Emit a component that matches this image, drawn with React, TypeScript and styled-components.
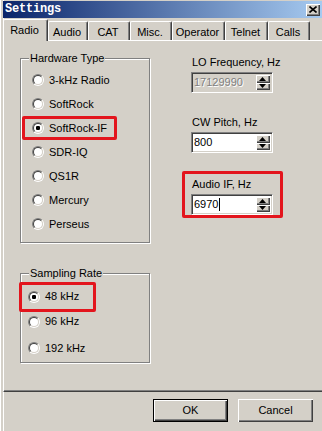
import React from "react";
import styled, { createGlobalStyle } from "styled-components";

const GlobalStyle = createGlobalStyle`
  html, body { margin: 0; padding: 0; background: #d4d0c8; }
  body {
    font-family: "Liberation Sans", Arial, sans-serif;
    font-size: 11px;
    color: #000;
  }
  * { box-sizing: border-box; }
`;

const Window = styled.div`
  width: 322px;
  height: 431px;
  overflow: hidden;
  background: #d4d0c8;
  padding: 1px 0 0 3px;
  box-shadow: inset 1px 0 0 #fff, inset 3px 0 0 #d4d0c8, inset 4px 0 0 #fff;
  display: flex;
  flex-direction: column;
`;

const TitleBar = styled.div`
  height: 17px;
  flex: none;
  display: flex;
  align-items: center;
  justify-content: space-between;
  padding: 0 2px 0 2px;
  background: linear-gradient(to right, #0a246a, #a6caf0);
`;

const TitleText = styled.span`
  font-family: "Liberation Mono", "Courier New", monospace;
  font-weight: bold;
  font-size: 12px;
  letter-spacing: -0.2px;
  color: #fff;
  line-height: 17px;
`;

const CloseButton = styled.div`
  width: 14px;
  height: 12px;
  background: #d4d0c8;
  box-shadow: inset 1px 1px 0 #fff, inset -1px -1px 0 #404040, inset -2px -2px 0 #808080;
  display: flex;
  align-items: center;
  justify-content: center;
`;

const TabStrip = styled.div`
  margin-top: 1px;
  height: 21px;
  flex: none;
  display: flex;
  align-items: flex-end;
`;

const Tab = styled.div<{ $w: number; $active?: boolean }>`
  width: ${(p) => p.$w}px;
  height: ${(p) => (p.$active ? 22 : 19)}px;
  margin-bottom: ${(p) => (p.$active ? -1 : 0)}px;
  position: relative;
  z-index: ${(p) => (p.$active ? 1 : 0)};
  background: #d4d0c8;
  border-top: 1px solid #fff;
  border-left: 1px solid #fff;
  border-right: 1px solid #404040;
  border-radius: 2px 2px 0 0;
  box-shadow: inset -1px 0 0 #808080;
  display: flex;
  justify-content: center;
  align-items: center;
  padding-top: ${(p) => (p.$active ? 0 : 2)}px;
  padding-right: 2px;
  line-height: 13px;
  white-space: nowrap;
`;

const Panel = styled.div`
  height: 352px;
  flex: none;
  border-top: 1px solid #fff;
  border-left: 1px solid #fff;
  border-bottom: 1px solid #404040;
  box-shadow: inset 0 -1px 0 #808080;
  display: flex;
  gap: 41px;
  padding: 17px 0 0 16px;
`;

const Column = styled.div<{ $w: number; $shift?: number }>`
  width: ${(p) => p.$w}px;
  flex: none;
  display: flex;
  flex-direction: column;
  margin-top: ${(p) => p.$shift ?? 0}px;
`;

const GroupBox = styled.div<{ $h: number; $mt?: number; $pt: number; $pl: number }>`
  position: relative;
  height: ${(p) => p.$h}px;
  margin-top: ${(p) => p.$mt ?? 0}px;
  border: 1px solid #808080;
  box-shadow: inset 1px 1px 0 #fff, 1px 1px 0 #fff;
  display: flex;
  flex-direction: column;
  align-items: flex-start;
  padding: ${(p) => p.$pt}px 0 0 ${(p) => p.$pl}px;
`;

const GroupTitle = styled.span`
  position: absolute;
  top: -7px;
  left: 8px;
  padding: 0 1px;
  background: #d4d0c8;
  line-height: 13px;
  white-space: nowrap;
`;

const RadioRow = styled.label<{ $h: number }>`
  height: ${(p) => p.$h}px;
  display: flex;
  align-items: center;
  gap: 5px;
  flex: none;
  line-height: 13px;
  white-space: nowrap;
`;

const Highlight = styled.div<{ $w: number; $ml: number; $pl: number; $mt?: number; $pt?: number; $mb?: number }>`
  width: ${(p) => p.$w}px;
  margin-left: ${(p) => p.$ml}px;
  margin-top: ${(p) => p.$mt ?? 0}px;
  margin-bottom: ${(p) => p.$mb ?? 0}px;
  padding-left: ${(p) => p.$pl}px;
  padding-top: ${(p) => p.$pt ?? 0}px;
  border: 3px solid #e3151d;
  border-radius: 2px;
  flex: none;
`;

const RadioCircle = styled.span<{ $checked?: boolean }>`
  width: 12px;
  height: 12px;
  flex: none;
  border-radius: 50%;
  border: 1px solid;
  border-color: #808080 #fff #fff #808080;
  display: flex;
  &::before {
    content: "";
    flex: 1;
    border-radius: 50%;
    border: 1px solid;
    border-color: #404040 #d4d0c8 #d4d0c8 #404040;
    background: #fff
      ${(p) =>
        p.$checked
          ? "radial-gradient(circle at 50% 50%, #000 0, #000 2px, transparent 2.4px)"
          : "none"};
    background-color: #fff;
  }
`;

const Field = styled.div<{ $mt?: number }>`
  display: flex;
  flex-direction: column;
  gap: 3px;
  margin-top: ${(p) => p.$mt ?? 0}px;
  flex: none;
`;

const FieldLabel = styled.span`
  line-height: 13px;
  padding-left: 1px;
  white-space: nowrap;
`;

const SpinBox = styled.div<{ $disabled?: boolean }>`
  width: 82px;
  height: 21px;
  display: flex;
  background: ${(p) => (p.$disabled ? "#d4d0c8" : "#fff")};
  border: 1px solid;
  border-color: #808080 #fff #fff #808080;
  box-shadow: inset 1px 1px 0 #404040, inset -1px -1px 0 #d4d0c8;
  padding: 2px 2px 2px 2px;
`;

const SpinText = styled.span<{ $disabled?: boolean }>`
  flex: 1;
  display: flex;
  align-items: center;
  line-height: 13px;
  color: ${(p) => (p.$disabled ? "#808080" : "#000")};
  text-shadow: ${(p) => (p.$disabled ? "1px 1px 0 #fff" : "none")};
`;

const Caret = styled.span`
  width: 1px;
  height: 13px;
  background: #000;
  margin-left: 1px;
`;

const SpinButtons = styled.div`
  width: 14px;
  display: flex;
  flex-direction: column;
`;

const SpinHalf = styled.div`
  flex: 1;
  background: #d4d0c8;
  box-shadow: inset 1px 1px 0 #fff, inset -1px -1px 0 #404040, inset -2px -2px 0 #808080;
  display: flex;
  align-items: center;
  justify-content: center;
  padding-right: 1px;
`;

const Footer = styled.div`
  flex: 1;
  display: flex;
  justify-content: flex-end;
  align-items: flex-start;
  gap: 10px;
  padding: 7px 9px 0 0;
`;

const Button = styled.div<{ $default?: boolean }>`
  width: 75px;
  height: 23px;
  display: flex;
  align-items: center;
  justify-content: center;
  background: #d4d0c8;
  border: ${(p) => (p.$default ? "1px solid #000" : "none")};
  box-shadow: inset 1px 1px 0 #fff, inset -1px -1px 0 #404040, inset -2px -2px 0 #808080;
  line-height: 13px;
`;

const Arrow = ({ up }: { up?: boolean }) => (
  <svg width="7" height="4" viewBox="0 0 7 4">
    <path d={up ? "M3.5 0 L7 4 L0 4 Z" : "M0 0 L7 0 L3.5 4 Z"} fill="#000" />
  </svg>
);

const Spin = ({ value, disabled, caret }: { value: string; disabled?: boolean; caret?: boolean }) => (
  <SpinBox $disabled={disabled}>
    <SpinText $disabled={disabled}>
      {value}
      {caret && <Caret />}
    </SpinText>
    <SpinButtons>
      <SpinHalf>
        <Arrow up />
      </SpinHalf>
      <SpinHalf>
        <Arrow />
      </SpinHalf>
    </SpinButtons>
  </SpinBox>
);

const tabs = [
  { label: "Radio", w: 45, active: true },
  { label: "Audio", w: 40 },
  { label: "CAT", w: 42 },
  { label: "Misc.", w: 42 },
  { label: "Operator", w: 53 },
  { label: "Telnet", w: 43 },
  { label: "Calls", w: 42 },
];

const hardware = ["3-kHz Radio", "SoftRock", "SoftRock-IF", "SDR-IQ", "QS1R", "Mercury", "Perseus"];

export default function App() {
  return (
    <>
      <GlobalStyle />
      <Window>
        <TitleBar>
          <TitleText>Settings</TitleText>
          <CloseButton>
            <svg width="8" height="7" viewBox="0 0 8 7">
              <path d="M0.5 0.5 L7.5 6.5 M7.5 0.5 L0.5 6.5" stroke="#000" strokeWidth="1.6" />
            </svg>
          </CloseButton>
        </TitleBar>
        <TabStrip>
          {tabs.map((t) => (
            <Tab key={t.label} $w={t.w} $active={t.active}>
              {t.label}
            </Tab>
          ))}
        </TabStrip>
        <Panel>
          <Column $w={130}>
            <GroupBox $h={185} $pt={9} $pl={11}>
              <GroupTitle>Hardware Type</GroupTitle>
              {hardware.map((h) =>
                h === "SoftRock-IF" ? (
                  <Highlight key={h} $w={95} $ml={-10} $pl={7}>
                    <RadioRow $h={18}>
                      <RadioCircle $checked />
                      {h}
                    </RadioRow>
                  </Highlight>
                ) : (
                  <RadioRow key={h} $h={24}>
                    <RadioCircle />
                    {h}
                  </RadioRow>
                )
              )}
            </GroupBox>
            <GroupBox $h={90} $mt={30} $pt={7} $pl={7}>
              <GroupTitle>Sampling Rate</GroupTitle>
              <Highlight $w={77} $ml={-9} $pl={6} $mt={1} $mb={-3}>
                <RadioRow $h={23.5}>
                  <RadioCircle $checked />
                  48 kHz
                </RadioRow>
              </Highlight>
              <RadioRow $h={26.5}>
                <RadioCircle />
                96 kHz
              </RadioRow>
              <RadioRow $h={26.5}>
                <RadioCircle />
                192 kHz
              </RadioRow>
            </GroupBox>
          </Column>
          <Column $w={82} $shift={-2}>
            <Field>
              <FieldLabel>LO Frequency, Hz</FieldLabel>
              <Spin value="17129990" disabled />
            </Field>
            <Field $mt={23}>
              <FieldLabel>CW Pitch, Hz</FieldLabel>
              <Spin value="800" />
            </Field>
            <Highlight $w={101} $ml={-9} $pl={6} $mt={18} $pt={4}>
              <Field>
                <FieldLabel>Audio IF, Hz</FieldLabel>
                <Spin value="6970" caret />
              </Field>
            </Highlight>
          </Column>
        </Panel>
        <Footer>
          <Button $default>OK</Button>
          <Button>Cancel</Button>
        </Footer>
      </Window>
    </>
  );
}
